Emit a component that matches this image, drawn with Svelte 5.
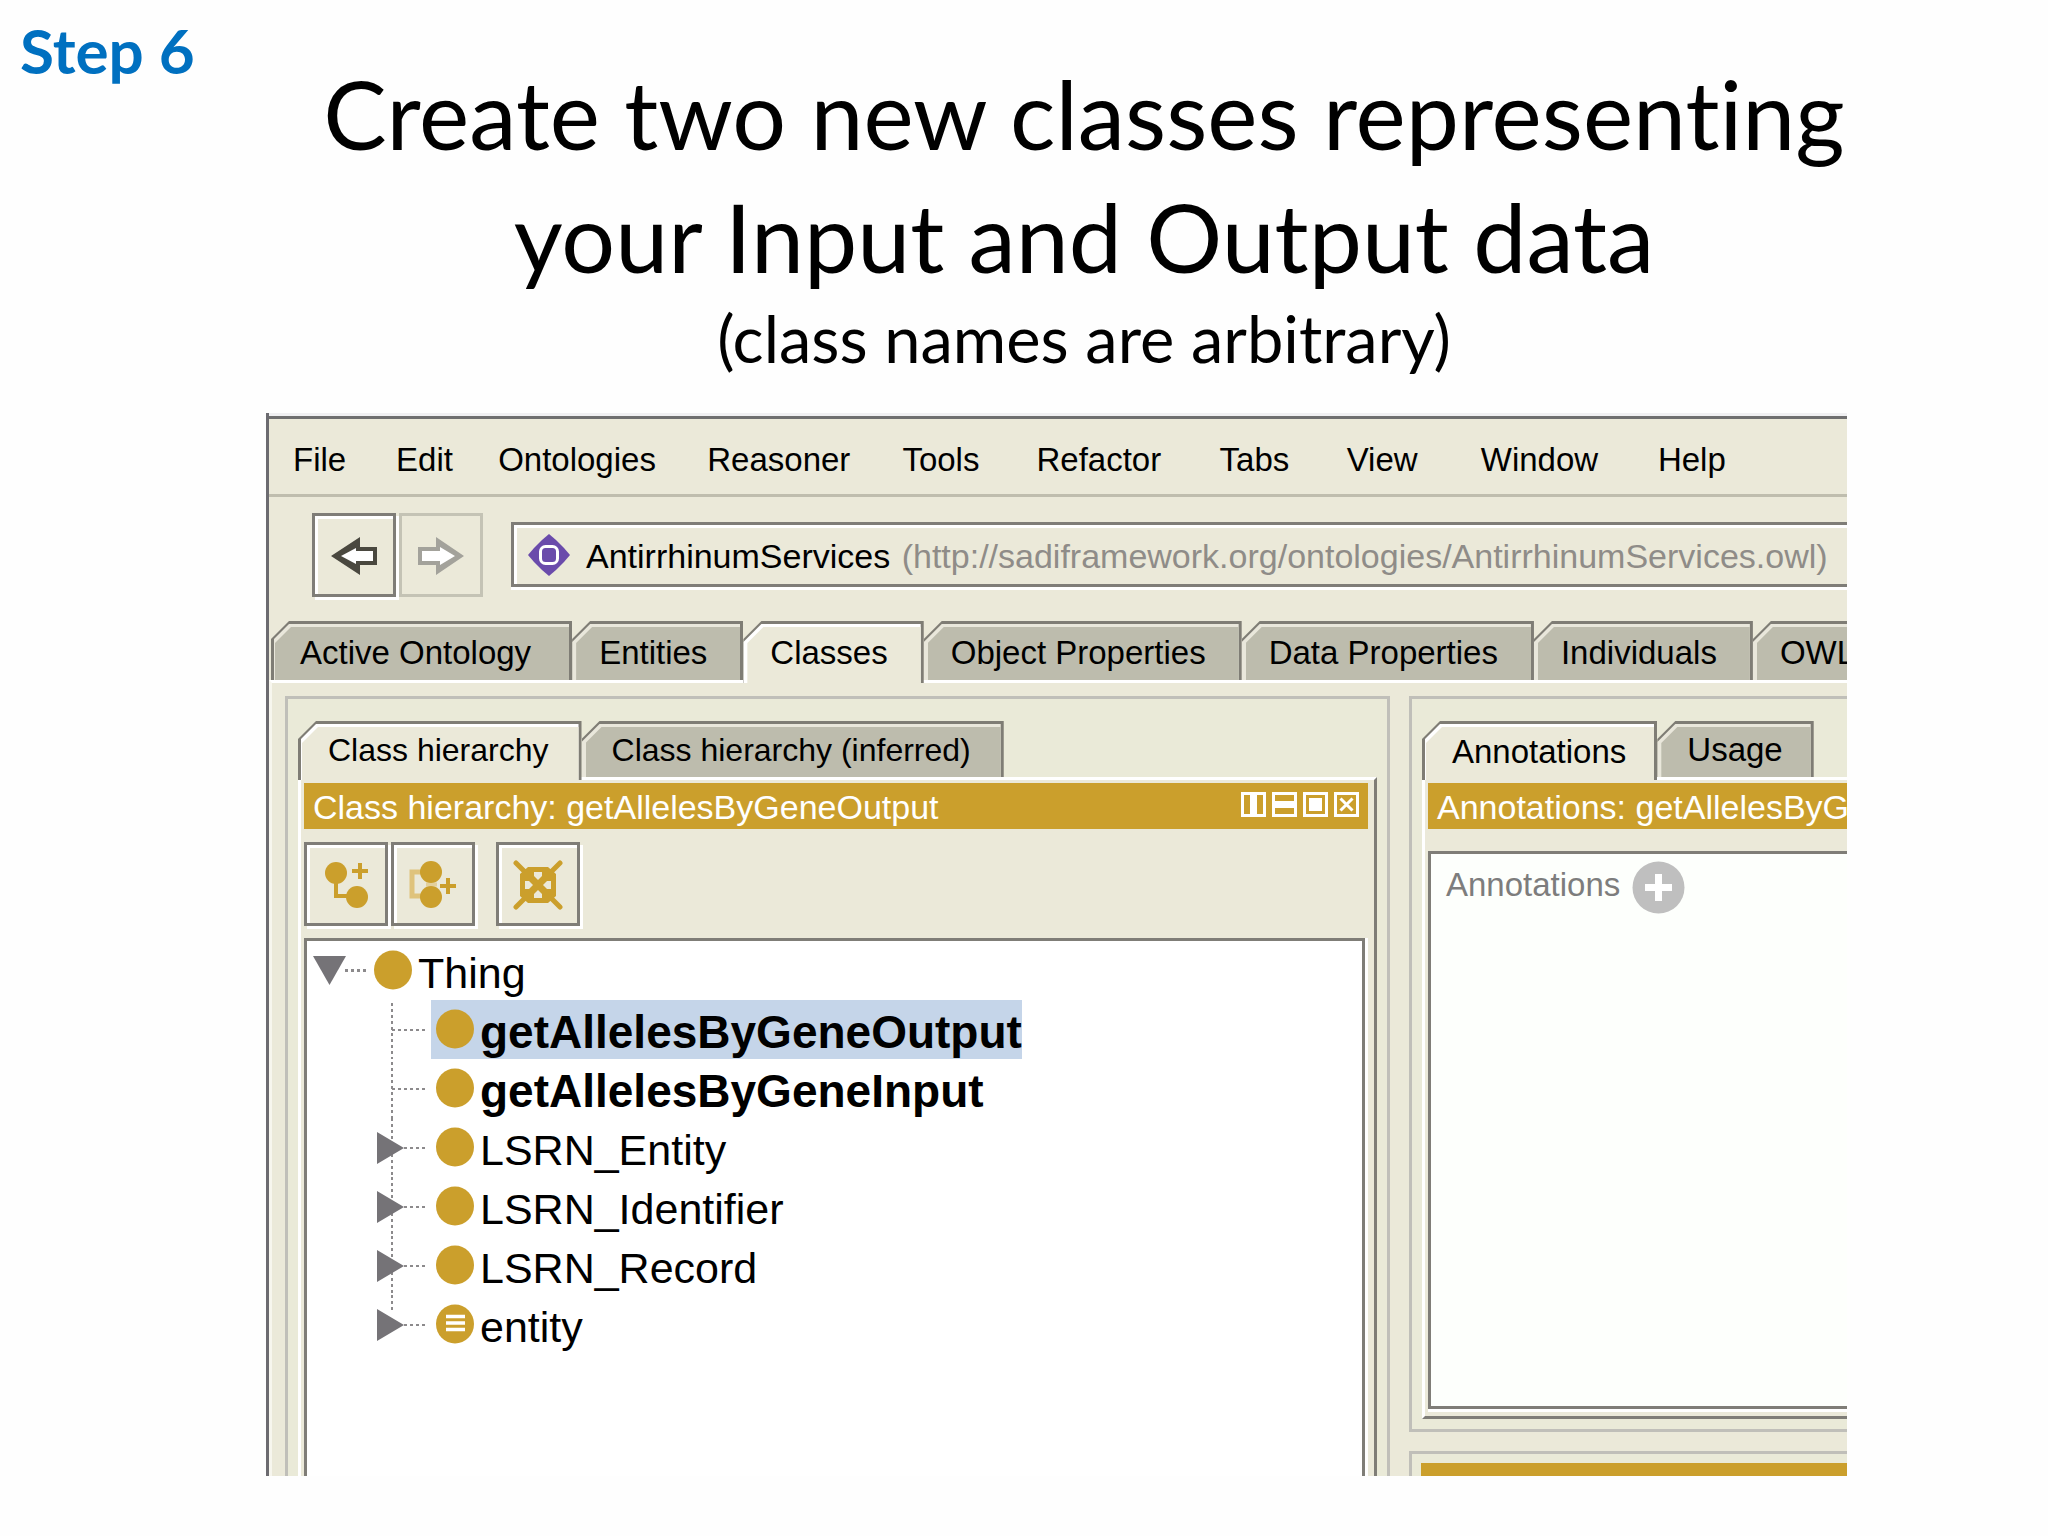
<script>
  const menus = ['File', 'Edit', 'Ontologies', 'Reasoner', 'Tools', 'Refactor', 'Tabs', 'View', 'Window', 'Help'];
  const mainTabs = ['Active Ontology', 'Entities', 'Classes', 'Object Properties', 'Data Properties', 'Individuals', 'OWL'];
  const children = [
    { name: 'getAllelesByGeneOutput', own: true, leaf: true },
    { name: 'getAllelesByGeneInput', own: true, leaf: true },
    { name: 'LSRN_Entity' },
    { name: 'LSRN_Identifier' },
    { name: 'LSRN_Record' },
    { name: 'entity', defined: true }
  ];
  let activeMain = $state('Classes');
  let leftTab = $state('Class hierarchy');
  let rightTab = $state('Annotations');
  let selected = $state('getAllelesByGeneOutput');
</script>

{#snippet dot(defined)}
  <svg class="dot" viewBox="0 0 38 40" aria-hidden="true">
    <ellipse cx="19" cy="20" rx="19" ry="19.5" fill="#cb9f2c" />
    {#if defined}
      <path d="M10 12.500h19M10 19h19M10 25.500h19" stroke="#fff" stroke-width="3.500" />
    {/if}
  </svg>
{/snippet}

{#snippet tabs(list, current, pick)}
  {#each list as t}
    <button class="tab" class:active={t === current} role="tab" aria-selected={t === current} onclick={() => pick(t)}>{t}</button>
  {/each}
{/snippet}

<main class="slide">
  <header>
    <p class="step">Step 6</p>
    <h1>Create two new classes representing<br />your Input and Output data<small>(class names are arbitrary)</small></h1>
  </header>

  <section class="window" aria-label="Ontology editor">
    <nav class="menu">
      {#each menus as m}<button>{m}</button>{/each}
    </nav>

    <div class="toolbar">
      <button class="tool" aria-label="Back">
        <svg width="46" height="38" viewBox="0 0 46 38"><path d="M0 19L29 0V10H46V28H29V38Z" fill="#4a483f" /><path d="M10 19L25 11V14H42V24H25V27Z" fill="#fff" /></svg>
      </button>
      <button class="tool" disabled aria-label="Forward">
        <svg width="46" height="38" viewBox="0 0 46 38"><path d="M46 19L18 0V10H0V28H18V38Z" fill="#a3a29b" /><path d="M37 19L22 10V14H4V24H22V28Z" fill="#fff" /></svg>
      </button>
      <button class="address">
        <svg width="42" height="42" viewBox="0 0 42 42">
          <path d="M21 0L28 6L36 14L42 21L36 28L28 36L21 42L14 36L6 28L0 21L6 14L14 6Z" fill="#6a4bab" />
          <rect x="12.500" y="12.500" width="17" height="17" rx="5" fill="none" stroke="#fff" stroke-width="3" />
        </svg>
        <span>AntirrhinumServices <span class="uri">(http://sadiframework.org/ontologies/AntirrhinumServices.owl)</span></span>
      </button>
    </div>

    <div class="tabs main" role="tablist">
      {@render tabs(mainTabs, activeMain, (t) => (activeMain = t))}
    </div>

    <div class="workspace">
      <section class="panel left">
        <div class="tabs" role="tablist">
          {@render tabs(['Class hierarchy', 'Class hierarchy (inferred)'], leftTab, (t) => (leftTab = t))}
        </div>
        <div class="frame">
          <div class="title">
            <h2>Class hierarchy: {selected}</h2>
            <div class="controls">
              <button aria-label="Split vertically"><svg viewBox="0 0 25 25"><path d="M1.500 1.500H23.500V23.500H1.500Z" fill="none" stroke="#fff" stroke-width="3" /><path d="M12.500 2V23" stroke="#fff" stroke-width="7" /></svg></button>
              <button aria-label="Split horizontally"><svg viewBox="0 0 25 25"><path d="M1.500 1.500H23.500V23.500H1.500Z" fill="none" stroke="#fff" stroke-width="3" /><path d="M2 12.500H23" stroke="#fff" stroke-width="7" /></svg></button>
              <button aria-label="Float"><svg viewBox="0 0 25 25"><path d="M1.500 1.500H23.500V23.500H1.500Z" fill="none" stroke="#fff" stroke-width="3" /><path d="M6 6H19V19H6Z" fill="#fff" /></svg></button>
              <button aria-label="Close"><svg viewBox="0 0 25 25"><path d="M1.500 1.500H23.500V23.500H1.500Z" fill="none" stroke="#fff" stroke-width="3" /><path d="M6.500 6.500L18.500 18.500M18.500 6.500L6.500 18.500" stroke="#fff" stroke-width="3" /></svg></button>
            </div>
          </div>
          <div class="actions">
            <button class="tool" aria-label="Add subclass">
              <svg width="48" height="48" viewBox="0 0 48 48" fill="#cb9f2c" stroke="#cb9f2c">
                <circle cx="14" cy="12" r="11" stroke="none" /><circle cx="35" cy="36" r="11" stroke="none" />
                <path d="M14 12V35H35" fill="none" stroke-width="4" /><path d="M38 2V18M30 10H46" stroke-width="4" />
              </svg>
            </button>
            <button class="tool" aria-label="Add sibling class">
              <svg width="48" height="48" viewBox="0 0 48 48" fill="#cb9f2c" stroke="#cb9f2c">
                <path d="M21 11H3V35H21" fill="none" stroke="#dfc37c" stroke-width="5" />
                <path d="M12 35H22" fill="none" stroke-width="4" />
                <path d="M17 23.500H28" stroke="#e3d09c" stroke-width="4" />
                <circle cx="22" cy="11" r="11" stroke="none" /><circle cx="22" cy="36" r="11" stroke="none" />
                <path d="M39 17V33M31 25H47" stroke-width="4" />
              </svg>
            </button>
            <button class="tool apart" aria-label="Delete class">
              <svg width="50" height="50" viewBox="0 0 50 50">
                <path d="M3 3L47 47M47 3L3 47" stroke="#cb9f2c" stroke-width="5" stroke-linecap="round" />
                <path d="M15 7H35L43 14V36L35 43H15L7 36V14Z" fill="#cb9f2c" />
                <path d="M21 12H29V16L25 20L21 16ZM21 38H29V34L25 30L21 34ZM12 21H16L20 25L16 29H12ZM38 21H34L30 25L34 29H38Z" fill="#ebe9d9" />
              </svg>
            </button>
          </div>
          <div class="tree">
            <div class="row">
              <button class="branch root" aria-label="Collapse Thing">
                <svg width="66" height="59" viewBox="0 0 66 59"><path d="M6 15H39L22.500 44Z" fill="#757377" /><path d="M38 29.500H60" stroke="#8c8a8c" stroke-width="3" stroke-dasharray="3 3" /></svg>
              </button>
              <button class="node top">{@render dot(false)}<span>Thing</span></button>
            </div>
            <ul>
              {#each children as c, i}
                <li class="row">
                  {#if c.leaf}
                    <svg class="branch" width="54" height="59" viewBox="0 0 54 59" aria-hidden="true">
                      <path d="M15 3V59M15 30H51" fill="none" stroke="#8c8a8c" stroke-width="2" stroke-dasharray="3 3" />
                    </svg>
                  {:else}
                    <button class="branch" aria-label={'Expand ' + c.name}>
                      <svg width="54" height="59" viewBox="0 0 54 59">
                        <path d={i === children.length - 1 ? 'M15 0V15M27 30H51' : 'M15 0V59M27 30H51'} fill="none" stroke="#8c8a8c" stroke-width="2" stroke-dasharray="3 3" />
                        <path d="M0 14L27 30L0 46Z" fill="#757377" />
                      </svg>
                    </button>
                  {/if}
                  <button class="node" class:own={c.own} class:selected={c.name === selected} onclick={() => (selected = c.name)}>{@render dot(c.defined)}<span>{c.name}</span></button>
                </li>
              {/each}
            </ul>
          </div>
        </div>
      </section>

      <div class="side">
        <section class="panel">
          <div class="tabs" role="tablist">
            {@render tabs(['Annotations', 'Usage'], rightTab, (t) => (rightTab = t))}
          </div>
          <div class="frame">
            <div class="title"><h2>Annotations: {selected}</h2></div>
            <div class="notes">
              <span>Annotations</span>
              <button aria-label="Add annotation">
                <svg width="53" height="53" viewBox="0 0 53 53"><circle cx="26.500" cy="26.500" r="26" fill="#bfbfbf" /><path d="M26.500 13V40M13 26.500H40" stroke="#fff" stroke-width="7" /></svg>
              </button>
            </div>
          </div>
        </section>
        <section class="panel next" aria-label="Description"><div class="bar"></div></section>
      </div>
    </div>
  </section>
</main>

<style>
  :global(body) { margin: 0; background: #fefefe; }
  * { box-sizing: border-box; }
  button { font: inherit; color: inherit; border: 0; padding: 0; margin: 0; background: none; text-align: left; white-space: nowrap; }
  svg { display: block; flex: none; }

  .slide {
    min-height: 100vh;
    display: flex;
    flex-direction: column;
    padding-bottom: 60px;
    overflow: hidden;
    font-family: Lato, sans-serif;
    font-variant-ligatures: none;
    color: #000;
  }
  header { display: grid; height: 413px; flex: none; }
  .step { grid-area: 1 / 1; margin: 14px 20px; font-size: 62px; line-height: 72px; font-weight: 700; color: #0070c0; }
  h1 { grid-area: 1 / 1; margin: 52px 0 0 120px; font-size: 95px; line-height: 123px; font-weight: 400; text-align: center; }
  small { display: block; font-size: 65px; line-height: 80px; }

  .window {
    flex: 1;
    display: flex;
    flex-direction: column;
    min-width: 0;
    margin: 0 201px 0 266px;
    border-left: 3px solid #6c6b70;
    background: linear-gradient(#f0f0f2 3px, #ebe9d9 3px);
    font-family: "Liberation Sans", Arial, sans-serif;
    overflow: hidden;
  }
  .menu {
    display: grid;
    grid-template-columns: 103fr 102fr 209fr 195fr 134fr 183fr 127fr 134fr 177fr 189fr;
    height: 81px;
    flex: none;
    margin-top: 3px;
    padding: 6px 0 0 24px;
    border-top: 3px solid #6f6f6f;
    border-bottom: 3px solid #bfbdae;
    font-size: 33px;
  }
  .toolbar { display: flex; height: 124px; flex: none; padding: 16px 0 0 43px; font-size: 34px; }
  .tool {
    width: 84px;
    height: 84px;
    flex: none;
    display: flex;
    align-items: center;
    justify-content: center;
    padding-top: 1px;
    border: 3px solid #7f7d77;
    box-shadow: inset 3px 3px #fff, 3px 3px #fff;
    margin-right: 3px;
  }
  .tool:disabled { border-color: #c4c3b5; box-shadow: none; }
  .address {
    flex: 1;
    min-width: 0;
    display: flex;
    align-items: center;
    gap: 16px;
    height: 65px;
    margin: 9px 0 0 25px;
    padding-left: 14px;
    border: solid #7f7d77;
    border-width: 3px 0 3px 3px;
    box-shadow: inset 3px 3px #fff, 0 3px #fff;
  }
  .address > span { padding-top: 3px; }
  .uri { color: #8f8c88; margin-left: 2px; }

  .tabs { display: flex; height: 56px; flex: none; font-size: 32px; }
  .tabs.main { height: 59px; font-size: 33px; padding-left: 2px; }
  .tab {
    position: relative;
    isolation: isolate;
    flex: none;
    padding: 2px 33px 0 30px;
    background: #7f7d75;
    clip-path: polygon(0 18px, 18px 0, 100% 0, 100% 100%, 0 100%);
  }
  .main .tab { padding: 4px 36px 0 27px; }
  .main .tab:first-child { padding: 4px 41px 0 29px; }
  .tab::before, .tab::after { content: ""; position: absolute; z-index: -1; }
  .tab::before { inset: 3px 3px 0 0; background: #e9e7db; clip-path: polygon(0 18px, 18px 0, 100% 0, 100% 100%, 0 100%); }
  .tab:first-child::before { left: 3px; clip-path: polygon(0 15px, 15px 0, 100% 0, 100% 100%, 0 100%); }
  .tab::after { inset: 6px 3px 0 4px; background: #bdbcad; clip-path: polygon(0 16px, 16px 0, 100% 0, 100% 100%, 0 100%); }
  .tab.active { z-index: 1; margin-bottom: -3px; padding-bottom: 3px; }
  .tab.active::before { background: #fff; }
  .tab.active::after { background: #ebe9d9; }

  .workspace {
    flex: 1;
    display: grid;
    grid-template-columns: minmax(0, 1105fr) minmax(0, 438fr);
    gap: 19px;
    padding: 13px 0 0 13px;
    border-top: 3px solid #fff;
    border-left: 3px solid #f7f6ee;
  }
  .panel { display: flex; flex-direction: column; border: 3px solid #c0bfb9; background: #eaead8; }
  .left { padding: 22px 10px 0 10px; border-bottom: 0; }
  .frame { flex: 1; display: flex; flex-direction: column; border: solid #fff; border-width: 3px 0 0 3px; padding: 3px 6px 0 3px; background: #ebe9d9; }
  .left .frame { border-right: 3px solid #7f7d77; }
  .title { display: flex; align-items: center; justify-content: space-between; height: 46px; flex: none; padding: 0 9px; background: #cb9f2c; color: #fff; overflow: hidden; }
  h2 { margin: 0; padding-top: 2px; font-size: 34px; line-height: 44px; font-weight: 400; white-space: nowrap; }
  .controls { display: flex; gap: 6px; padding-bottom: 4px; }
  .controls svg { width: 25px; height: 25px; }
  .actions { display: flex; padding: 13px 0 12px; }
  .apart { margin-left: 18px; }

  .tree { flex: 1; margin-right: 3px; border: solid #7f7d77; border-width: 3px 3px 0 3px; background: #fff; box-shadow: 3px 0 #fff; font-size: 43px; }
  ul { list-style: none; margin: 0; padding: 0 0 0 70px; }
  .row { display: flex; height: 59px; }
  .branch { flex: none; }
  .node { display: flex; align-items: center; gap: 6px; height: 59px; padding: 0 0 2px 5px; }
  .node span { padding-top: 6px; line-height: 54px; }
  .top { padding-left: 1px; }
  .own { font-size: 46px; font-weight: 700; }
  .selected { background: #c5d5e9; }
  .dot { width: 38px; height: 40px; }

  .side { display: flex; flex-direction: column; gap: 19px; min-width: 0; }
  .side .panel { border-right: 0; padding: 22px 0 10px 10px; overflow: hidden; }
  .side .panel:first-child { flex: 1; }
  .side .tabs { font-size: 33px; }
  .side .tab { padding: 2px 31px 0 30px; }
  .side .frame { padding: 3px 0 7px 3px; border-bottom: 3px solid #7f7d77; }
  .notes {
    flex: 1;
    display: flex;
    align-items: flex-start;
    gap: 12px;
    margin-top: 22px;
    padding: 7px 0 0 15px;
    border: solid #7f7d77;
    border-width: 3px 0 3px 3px;
    box-shadow: 0 3px #fff;
    background: #fdfffc;
    font-size: 33px;
    line-height: 48px;
    color: #7d7d7d;
  }
  .side .next { padding: 9px 0 0 9px; border-bottom: 0; }
  .bar { height: 13px; background: #cb9f2c; }
</style>
